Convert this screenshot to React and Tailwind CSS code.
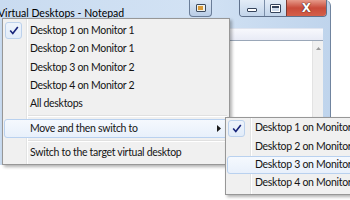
import React from 'react';

const mainItems = [
    { label: 'Desktop 1 on Monitor 1', checked: true },
    { label: 'Desktop 2 on Monitor 1' },
    { label: 'Desktop 3 on Monitor 2' },
    { label: 'Desktop 4 on Monitor 2' },
    { label: 'All desktops' },
];

const subItems = [
    { label: 'Desktop 1 on Monitor 1', checked: true },
    { label: 'Desktop 2 on Monitor 1' },
    { label: 'Desktop 3 on Monitor 2', highlighted: true },
    { label: 'Desktop 4 on Monitor 2' },
];

const CheckBox = () => (
    <span className="absolute left-[2px] top-[0.5px] bottom-[0.5px] flex w-[17px] items-center justify-center rounded-[3px] border border-[#bcd1ec] bg-[linear-gradient(#eef4fc,#e2ecf9)]">
        <svg width="10" height="9" viewBox="0 0 10 9">
            <path d="M1.2 4.6 L3.8 7.6 L8.8 1" fill="none" stroke="#17237a" strokeWidth="1.6" />
        </svg>
    </span>
);

const MenuItem = ({ label, checked, highlighted, arrow, indent }) => (
    <div className={`relative flex h-[18.4px] items-center pr-2 ${indent}`}>
        {highlighted && (
            <span className="absolute inset-x-[1px] inset-y-0 rounded-[3px] border border-[#b9d1ef] bg-[linear-gradient(#f5f9fe,#e8f0fb)]" />
        )}
        {checked && <CheckBox />}
        <span className="relative whitespace-nowrap tracking-[-0.3px]">{label}</span>
        {arrow && (
            <svg className="absolute right-[8px]" width="4" height="7" viewBox="0 0 4 7">
                <path d="M0 0 L4 3.5 L0 7 Z" fill="#1a1a1a" />
            </svg>
        )}
    </div>
);

const Separator = ({ indent }) => (
    <div className={`flex h-[6px] items-center pr-[2px] ${indent}`}>
        <div className="h-[2px] w-full border-t border-b border-t-[#e0e0e0] border-b-white" />
    </div>
);

const CaptionGlyphMin = () => (
    <span className="mt-[3px] h-[4px] w-[10px] rounded-[1px] border border-[#36445c] bg-white" />
);

const CaptionGlyphMax = () => (
    <span className="h-[9px] w-[11px] rounded-[1px] border border-[#36445c] bg-white p-[1px]">
        <span className="block h-full w-full border-t-[2px] border-[#36445c] bg-[#cfdcec]" />
    </span>
);

const App = () => {
    return (
        <div className="relative h-[200px] w-[350px] overflow-hidden bg-white font-['Lato',sans-serif] text-[10.5px] text-[#141414]">
            {/* notepad window behind the menus */}
            <div className="flex h-[165px] w-[331px] flex-col rounded-tr-[6px] border-r border-[#70849f] bg-[linear-gradient(to_right,#c9dbf0,#d2e2f4_60%,#bfd4ec)]">
                <div className="flex h-[28px] items-start">
                    <span className="-ml-[2px] mt-[6px] flex-1 whitespace-nowrap text-[10.5px] text-black">
                        Virtual Desktops - Notepad
                    </span>
                    <div className="flex h-[17px] w-[23px] items-center justify-center rounded-b-[4px] border border-t-0 border-[#6a7d98] bg-[linear-gradient(#dde8f5,#b9cde6)]">
                        <span className="flex h-[8px] w-[10px] items-center justify-center rounded-[1px] border border-[#3c4a5e] bg-[#f1f1e8]">
                            <span className="h-[4px] w-[5px] bg-[#d89a3a]" />
                        </span>
                    </div>
                    <div className="w-[27px]" />
                    <div className="flex h-[17px] overflow-hidden rounded-b-[4px] border border-t-0 border-[#5f718c]">
                        <div className="flex w-[25px] items-center justify-center border-r border-[#7b8ea8] bg-[linear-gradient(#e3ecf7,#c2d4ea)]">
                            <CaptionGlyphMin />
                        </div>
                        <div className="flex w-[22px] items-center justify-center border-r border-[#7b3a32] bg-[linear-gradient(#e3ecf7,#c2d4ea)]">
                            <CaptionGlyphMax />
                        </div>
                        <div className="flex w-[39px] items-center justify-center bg-[linear-gradient(#e69a8a,#c94b3a_50%,#d4604a)]">
                            <span className="font-['DejaVu_Sans',sans-serif] text-[12px] leading-none font-bold text-white [text-shadow:0_0_1px_#3a1a14,0_0_1px_#3a1a14]">
                                X
                            </span>
                        </div>
                    </div>
                    <div className="w-[3px]" />
                </div>
                <div className="flex h-[12px]">
                    <div className="w-[2px]" />
                    <div className="flex-1 border-t border-[#dfe4ef] bg-[linear-gradient(#f7f8fc,#e8ebf6)]" />
                    <div className="w-[7px]" />
                </div>
                <div className="flex flex-1">
                    <div className="w-[2px]" />
                    <div className="flex flex-1 border-t border-l border-[#9aa7b8] bg-white">
                        <div className="flex-1" />
                        <div className="flex w-[11px] flex-col items-center border-l border-[#e3e3e3] bg-[#f0f0f0] pt-[6px]">
                            <svg width="5" height="3" viewBox="0 0 5 3">
                                <path d="M0 3 L2.5 0 L5 3 Z" fill="#9a9a9a" />
                            </svg>
                        </div>
                    </div>
                    <div className="w-[7px]" />
                </div>
                <div className="h-[2px]" />
            </div>

            {/* context menu */}
            <div className="absolute left-[2px] top-[18px] w-[228px] border border-[#979797] bg-[linear-gradient(to_right,#f0f0f0_23px,#e2e3e3_23px,#e2e3e3_24px,#ffffff_24px,#ffffff_25px,#f0f0f0_25px)] pt-[2.5px] pb-[2px] shadow-[2px_2px_3px_rgba(0,0,0,0.3)]">
                {mainItems.map((item) => (
                    <MenuItem key={item.label} {...item} indent="pl-[27px]" />
                ))}
                <Separator indent="pl-[25px]" />
                <MenuItem label="Move and then switch to" highlighted arrow indent="pl-[27px]" />
                <Separator indent="pl-[25px]" />
                <MenuItem label="Switch to the target virtual desktop" indent="pl-[27px]" />
            </div>

            {/* submenu */}
            <div className="absolute left-[225px] top-[117px] w-[160px] border border-[#979797] bg-[linear-gradient(to_right,#f0f0f0_24px,#e2e3e3_24px,#e2e3e3_25px,#ffffff_25px,#ffffff_26px,#f0f0f0_26px)] py-[1px] shadow-[2px_2px_3px_rgba(0,0,0,0.3)]">
                {subItems.map((item) => (
                    <MenuItem key={item.label} {...item} indent="pl-[29px]" />
                ))}
            </div>
        </div>
    );
};

export default App;
